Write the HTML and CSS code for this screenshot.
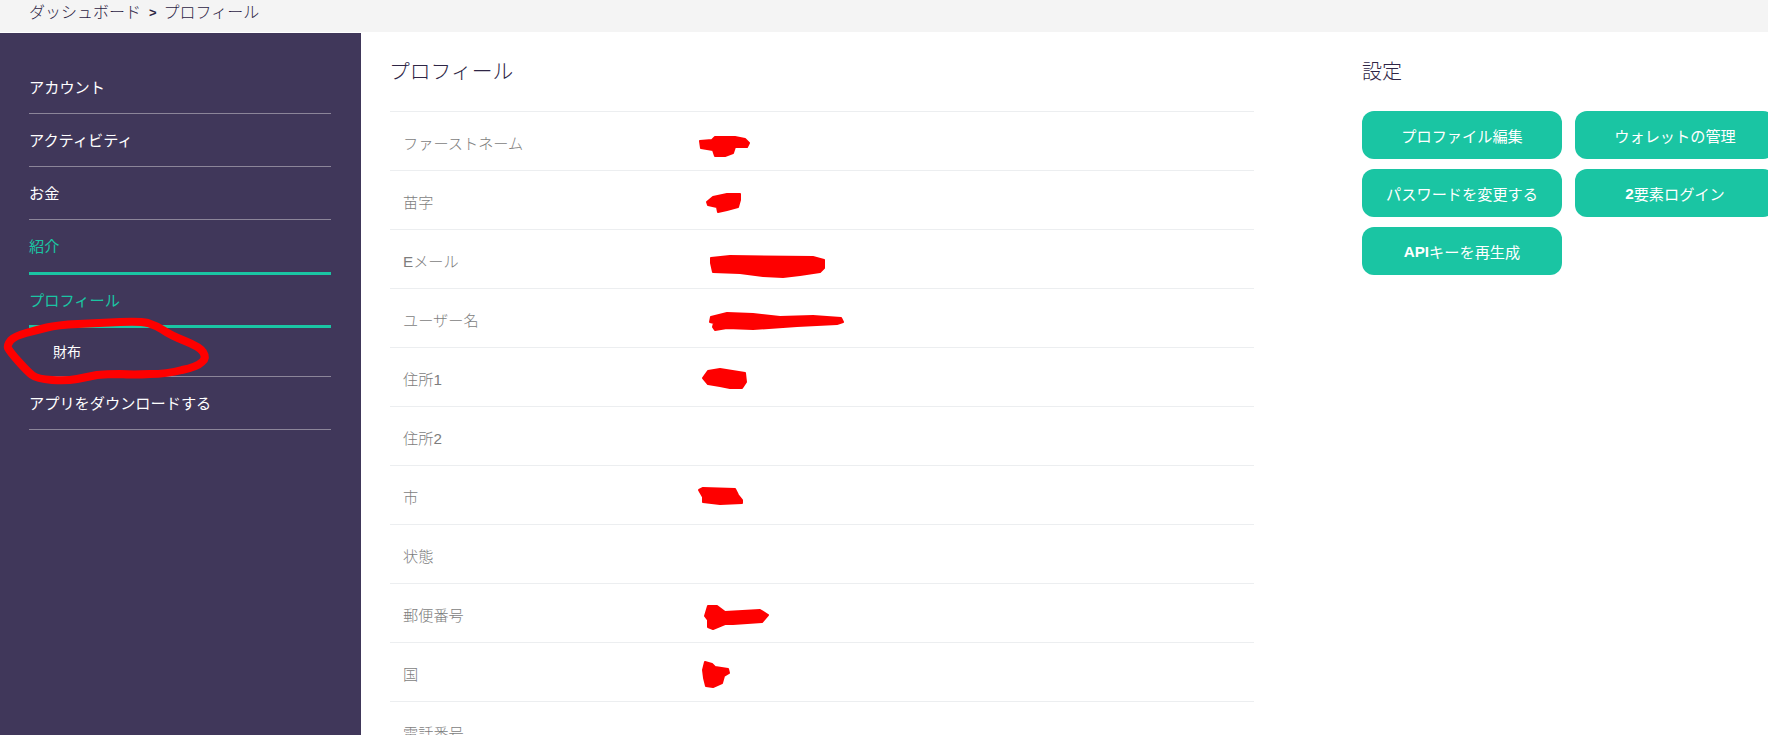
FILE: index.html
```html
<!DOCTYPE html>
<html lang="ja">
<head>
<meta charset="utf-8">
<title>プロフィール</title>
<link rel="stylesheet" href="styles.css">
</head>
<body>
<header class="topbar"><span>ダッシュボード</span><span class="sep">&gt;</span><span>プロフィール</span></header>
<div class="main">
  <aside class="sidebar">
    <nav class="nav">
      <a class="nav-item">アカウント</a>
      <a class="nav-item">アクティビティ</a>
      <a class="nav-item">お金</a>
      <a class="nav-item active">紹介</a>
      <a class="nav-item active short">プロフィール</a>
      <a class="nav-item sub">財布</a>
      <a class="nav-item">アプリをダウンロードする</a>
    </nav>
  </aside>
  <section class="profile">
    <h1 class="title profile-title">プロフィール</h1>
    <div class="rows">
      <div class="row"><span class="label">ファーストネーム</span></div>
      <div class="row"><span class="label">苗字</span></div>
      <div class="row"><span class="label">Eメール</span></div>
      <div class="row"><span class="label">ユーザー名</span></div>
      <div class="row"><span class="label">住所1</span></div>
      <div class="row"><span class="label">住所2</span></div>
      <div class="row"><span class="label">市</span></div>
      <div class="row"><span class="label">状態</span></div>
      <div class="row"><span class="label">郵便番号</span></div>
      <div class="row"><span class="label">国</span></div>
      <div class="row"><span class="label">電話番号</span></div>
    </div>
  </section>
  <section class="settings">
    <h2 class="title">設定</h2>
    <div class="buttons">
      <a class="btn">プロファイル編集</a>
      <a class="btn">ウォレットの管理</a>
      <a class="btn">パスワードを変更する</a>
      <a class="btn"><b>2</b>要素ログイン</a>
      <a class="btn"><b>API</b>キーを再生成</a>
    </div>
  </section>
</div>
<svg class="scribbles" width="1768" height="735" viewBox="0 0 1768 735" aria-hidden="true">
  <path class="ring" d="M11,340 Q15,336 26,333 Q37,330 47,327.5 Q57,325 78,324 Q100,323 120,322 Q140,321 148,323 Q157,326 163,330 Q170,335 185,341 Q200,347 203,352 Q207,358 202,362 Q197,367 182,370 Q167,374 150,374 Q133,375 120,374 Q107,374 97,375 Q87,377 77,379 Q67,381 52,380 Q37,379 32,375 Q28,372 19,362 Q10,352 8,348 Q7,345 11,340 Z"/>
  <path class="blot" d="M700,141 L712,140 L715,137 L735,137 L745,139 L749,143 L747,147 L735,147 L733,153 L725,156 L715,156 L713,150 L701,148 Z"/>
  <path class="blot" d="M707,202 L713,197 L727,194 L740,194 L740,200 L738,207 L727,210 L718,212 L717,207 L708,205 Z"/>
  <path class="blot" d="M711,258 L730,256 L813,257 L824,260 L824,268 L820,272 L800,275 L783,277 L763,276 L740,273 L713,272 L711,263 Z"/>
  <path class="blot" d="M711,317 L727,313 L753,314 L780,317 L813,316 L841,318 L843,322 L837,324 L797,326 L753,329 L727,328 L715,330 L713,327 L714,323 L710,322 Z"/>
  <path class="blot" d="M703,378 L708,371 L720,369 L745,373 L746,382 L742,388 L730,388 L720,386 L708,384 Z"/>
  <path class="blot" d="M699,490 L703,488 L735,489 L738,495 L742,500 L742,503 L720,504 L703,502 L703,497 Z"/>
  <path class="blot" d="M705,616 L708,606 L717,606 L725,612 L760,610 L768,615 L762,622 L733,624 L725,624 L713,629 L708,627 L708,620 Z"/>
  <path class="blot" d="M703,670 L705,662 L712,664 L715,667 L728,669 L729,673 L724,676 L722,683 L713,687 L706,686 L704,678 Z"/>
</svg>
</body>
</html>
```
FILE: styles.css
```css
* { box-sizing: border-box; }
html, body { margin: 0; height: 735px; overflow: hidden; }
body {
  background: #fff;
  font-family: "Liberation Sans", "Noto Sans CJK JP", sans-serif;
  color: #2e2545;
  position: relative;
}
.topbar {
  height: 33px;
  border-bottom: 1px solid #fff;
  background: #f4f4f4;
  padding: 0 0 8px 29px;
  display: flex;
  align-items: center;
  font-size: 16px;
  font-weight: 300;
  line-height: 23px;
}
.sep { margin: 0 7px 0 8px; font-weight: 700; font-size: 13px; }
.main { display: flex; height: 702px; }
.sidebar {
  width: 361px;
  flex: none;
  background: #40375a;
  padding: 28px 30px 0 29px;
}
.nav { display: flex; flex-direction: column; }
.nav-item {
  height: 53px;
  padding-bottom: 2px;
  display: flex;
  align-items: center;
  color: #fff;
  font-size: 15.2px;
  font-weight: 400;
  border-bottom: 1px solid #8c8599;
}
.nav-item.active {
  height: 55px;
  padding-bottom: 3px;
  color: #1ac5a3;
  border-bottom: 3px solid #1ac5a3;
}
.nav-item.active.short { height: 53px; }
.nav-item.sub {
  height: 49px;
  padding-left: 24px;
  font-size: 14px;
}
.profile { width: 864px; flex: none; margin-left: 29px; }
.title {
  margin: 0;
  height: 78px;
  padding-top: 21px;
  font-size: 20px;
  line-height: 36px;
  font-weight: 300;
  color: #2e2545;
}
.profile-title { font-size: 20.8px; margin-left: -1px; }
.rows { border-top: 1px solid #eceef0; }
.row {
  height: 59px;
  padding: 1px 0 0 13px;
  display: flex;
  align-items: center;
  border-bottom: 1px solid #eceef0;
}
.label { color: #7d7d7d; font-size: 15.2px; font-weight: 300; }
.settings { margin-left: 108px; width: 413px; flex: none; }
.buttons {
  display: grid;
  grid-template-columns: 200px 200px;
  column-gap: 13px;
  row-gap: 10px;
}
.btn {
  height: 48px;
  border-radius: 12px;
  background: #1ac5a3;
  color: #fff;
  font-size: 15.2px;
  font-weight: 400;
  display: flex;
  align-items: center;
  justify-content: center;
}
.scribbles {
  position: absolute;
  left: 0;
  top: 0;
  pointer-events: none;
}
.scribbles path { stroke: #fe0000; stroke-linecap: round; stroke-linejoin: round; }
.ring { fill: none; stroke-width: 8; }
.blot { fill: #fe0000; stroke-width: 2; }
```
